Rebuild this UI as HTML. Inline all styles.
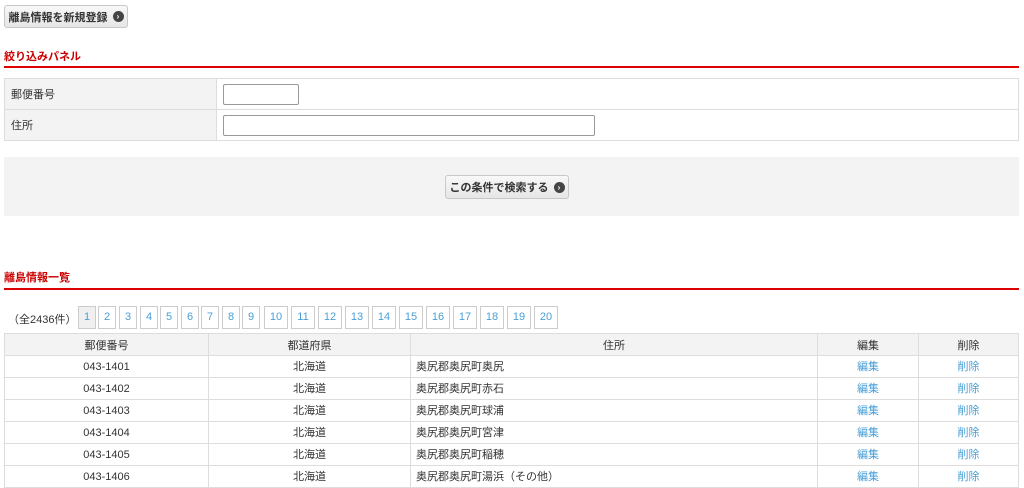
<!DOCTYPE html>
<html><head><meta charset="utf-8"><style>
*{box-sizing:border-box;margin:0;padding:0}
body{width:1024px;height:488px;overflow:hidden;background:#fff;font-family:"Liberation Sans","Noto Sans CJK JP",sans-serif;font-size:11px;color:#333;position:relative}
.abs{position:absolute}
.btn{position:absolute;border:1px solid #c8c8c8;border-radius:3px;background:linear-gradient(#f8f8f8,#e6e6e6);font-size:11px;color:#333;display:flex;align-items:center;justify-content:center;gap:5px;font-weight:bold}
.ic{width:11px;height:11px;border-radius:50%;background:#444;color:#fff;font-size:8px;line-height:11px;text-align:center;font-weight:bold}
h2{position:absolute;left:4px;font-size:11px;color:#c00;font-weight:bold}
.line{position:absolute;left:4px;width:1015px;height:2px;background:#d00}
table{border-collapse:collapse;position:absolute}
td,th{border:1px solid #ddd;font-weight:normal;vertical-align:middle}
.ft td{height:31px;padding-left:6px}
.ft td.l{background:#f3f3f3;width:212px}
input{border:1px solid #999;border-radius:2px;height:21px;background:#fff}
.pg{position:absolute;top:306px;height:23px;border:1px solid #ccc;color:#4a9fd6;font-size:11px;text-align:center;line-height:21px}
.dt th{background:#f3f3f3;height:22px}
.dt td{height:22px;text-align:center;line-height:12px;padding-top:1px}
.dt td.a{text-align:left;padding-left:5px}
.dt a{color:#4a9fd6;text-decoration:none}
</style></head><body>
<div class="btn" style="left:4px;top:5px;width:124px;height:23px">離島情報を新規登録<span class="ic">›</span></div>
<h2 style="top:48px">絞り込みパネル</h2>
<div class="line" style="top:66px"></div>
<table class="ft" style="left:4px;top:78px;width:1015px">
<tr><td class="l">郵便番号</td><td><input style="width:76px"></td></tr>
<tr><td class="l">住所</td><td><input style="width:372px"></td></tr>
</table>
<div class="abs" style="left:4px;top:157px;width:1015px;height:59px;background:#f3f3f3"></div>
<div class="btn" style="left:445px;top:175px;width:124px;height:24px">この条件で検索する<span class="ic">›</span></div>
<h2 style="top:269px">離島情報一覧</h2>
<div class="line" style="top:288px"></div>
<div class="abs" style="left:8px;top:311px">（全2436件）</div>
<div class="pg" style="left:78px;width:18px;background:#f0f0f0">1</div>
<div class="pg" style="left:98px;width:18px">2</div>
<div class="pg" style="left:119px;width:18px">3</div>
<div class="pg" style="left:140px;width:18px">4</div>
<div class="pg" style="left:160px;width:18px">5</div>
<div class="pg" style="left:181px;width:18px">6</div>
<div class="pg" style="left:201px;width:18px">7</div>
<div class="pg" style="left:222px;width:18px">8</div>
<div class="pg" style="left:242px;width:18px">9</div>
<div class="pg" style="left:264px;width:24px">10</div>
<div class="pg" style="left:291px;width:24px">11</div>
<div class="pg" style="left:318px;width:24px">12</div>
<div class="pg" style="left:345px;width:24px">13</div>
<div class="pg" style="left:372px;width:24px">14</div>
<div class="pg" style="left:399px;width:24px">15</div>
<div class="pg" style="left:426px;width:24px">16</div>
<div class="pg" style="left:453px;width:24px">17</div>
<div class="pg" style="left:480px;width:24px">18</div>
<div class="pg" style="left:507px;width:24px">19</div>
<div class="pg" style="left:534px;width:24px">20</div>
<table class="dt" style="left:4px;top:333px;width:1015px">
<tr><th style="width:204px">郵便番号</th><th style="width:202px">都道府県</th><th style="width:407px">住所</th><th style="width:101px">編集</th><th>削除</th></tr>
<tr><td>043-1401</td><td>北海道</td><td class="a">奥尻郡奥尻町奥尻</td><td><a>編集</a></td><td><a>削除</a></td></tr>
<tr><td>043-1402</td><td>北海道</td><td class="a">奥尻郡奥尻町赤石</td><td><a>編集</a></td><td><a>削除</a></td></tr>
<tr><td>043-1403</td><td>北海道</td><td class="a">奥尻郡奥尻町球浦</td><td><a>編集</a></td><td><a>削除</a></td></tr>
<tr><td>043-1404</td><td>北海道</td><td class="a">奥尻郡奥尻町宮津</td><td><a>編集</a></td><td><a>削除</a></td></tr>
<tr><td>043-1405</td><td>北海道</td><td class="a">奥尻郡奥尻町稲穂</td><td><a>編集</a></td><td><a>削除</a></td></tr>
<tr><td>043-1406</td><td>北海道</td><td class="a">奥尻郡奥尻町湯浜（その他）</td><td><a>編集</a></td><td><a>削除</a></td></tr>
</table>
</body></html>
